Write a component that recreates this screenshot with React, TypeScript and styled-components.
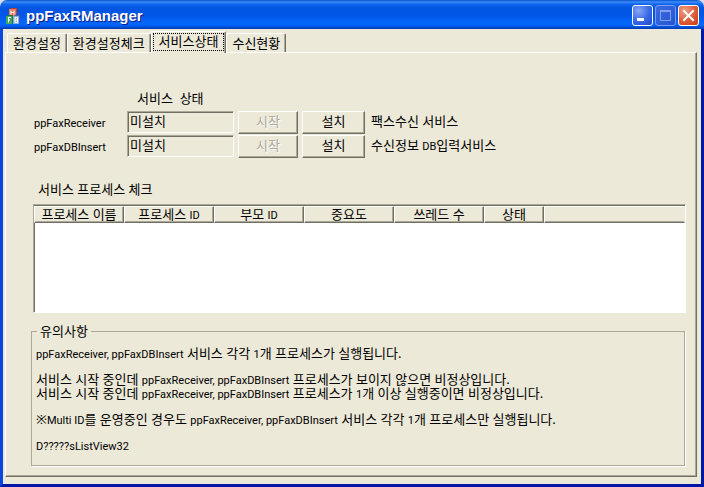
import React, { useState } from "react";
import styled, { createGlobalStyle, css } from "styled-components";

const face = "#ece9d8";
const shadow = "#aca899";
const dark = "#716f64";

const GlobalStyle = createGlobalStyle`
  body { margin: 0; background: #dcdcec; }
  *, *::before, *::after { box-sizing: border-box; }
  body, button, input, table {
    font-family: "Noto Sans", "Noto Sans CJK KR", sans-serif;
    font-size: 13px;
    line-height: 13px;
    color: #000;
  }
`;

const Window = styled.main`
  display: flex;
  flex-direction: column;
  min-height: 100vh;
  border-radius: 7px 7px 0 0;
  overflow: hidden;
`;

const TitleBar = styled.header`
  display: flex;
  align-items: center;
  gap: 5px;
  height: 29px;
  padding: 2px 5px 0 5px;
  background: linear-gradient(
    180deg,
    #0a4fd0 0,
    #3c90f8 2px,
    #1266ee 4px,
    #0256e2 8px,
    #0257e8 16px,
    #0464fa 22px,
    #0366fb 25px,
    #0250d8 27px,
    #0139b0 29px
  );
`;

const Title = styled.h1`
  flex: 1;
  margin: 0;
  font-family: "Liberation Sans", sans-serif;
  font-size: 15px;
  line-height: 20px;
  font-weight: bold;
  color: #fff;
  text-shadow: 1px 1px 0 #0a1883;
`;

const CaptionButtons = styled.div`
  display: flex;
  gap: 2px;
`;

const CaptionButton = styled.button<{ $tone: "blue" | "faded" | "red" }>`
  width: 21px;
  height: 21px;
  padding: 0;
  border: 1px solid ${(p) => (p.$tone === "faded" ? "#7a9cec" : "#fff")};
  border-radius: 3px;
  background: ${(p) =>
    p.$tone === "red"
      ? "radial-gradient(circle at 30% 25%, #f0a088 0, #e0603c 50%, #c83c14 100%)"
      : p.$tone === "faded"
        ? "linear-gradient(135deg, #3c6ce0, #2454d4)"
        : "radial-gradient(circle at 30% 25%, #88a8f4 0, #3c6ce8 50%, #1c48cc 100%)"};
  svg { display: block; }
`;

const Client = styled.div`
  flex: 1;
  display: flex;
  flex-direction: column;
  padding: 2px 4px 7px 2px;
  border: 3px solid;
  border-top: 0;
  border-color: #0018a8 #0018a8 #0018a8 #0a46e0;
  background: ${face};
`;

const TabList = styled.div`
  display: flex;
  align-items: flex-end;
  height: 21px;
  padding-left: 2px;
`;

const Tab = styled.button<{ $active: boolean }>`
  height: 19px;
  padding: 0 5px;
  border: 1px solid;
  border-color: #fff ${dark} transparent #fff;
  border-bottom: 0;
  border-radius: 2px 2px 0 0;
  box-shadow: inset -1px 0 0 ${shadow};
  background: ${face};
  white-space: nowrap;
  ${(p) =>
    p.$active &&
    css`
      z-index: 1;
      height: 22px;
      margin-bottom: -1px;
      padding: 0 1px 1px;
    `}
`;

const TabText = styled.span<{ $active: boolean }>`
  display: block;
  ${(p) =>
    p.$active &&
    css`
      padding: 1px 5px 2px;
      border: 1px dotted #000;
    `}
`;

const TabPage = styled.section`
  flex: 1;
  display: flex;
  flex-direction: column;
  padding: 38px 10px 10px 25px;
  border: 1px solid;
  border-color: #fff ${dark} ${dark} #fff;
  box-shadow: inset -1px -1px 0 ${shadow};
`;

const ServiceGrid = styled.div`
  display: grid;
  grid-template-columns: 89px 107px 60px 63px 1fr;
  column-gap: 4px;
  row-gap: 1px;
  padding-left: 3px;
`;

const StatusHeading = styled.h2`
  grid-column: 2 / -1;
  margin: 0 0 4px;
  padding-left: 10px;
  font-size: 13px;
  line-height: 15px;
  font-weight: normal;
  white-space: pre;
`;

const Latin = styled.span`
  font-family: Roboto, "Noto Sans", sans-serif;
  font-size: 11px;
  line-height: 0;
`;

const ServiceName = styled.label`
  padding-top: 3px;
  font-family: Roboto, "Noto Sans", sans-serif;
  font-size: 11px;
  line-height: 20px;
`;

const StatusField = styled.input`
  width: 100%;
  height: 22px;
  padding: 0 0 3px 2px;
  border: 1px solid;
  border-color: ${shadow} #fff #fff ${shadow};
  border-radius: 0;
  box-shadow: inset 1px 1px 0 ${dark};
  background: ${face};
  outline: 0;
`;

const ActionButton = styled.button`
  height: 23px;
  padding: 0 0 2px;
  border: 1px solid;
  border-color: #fff ${dark} ${dark} #fff;
  border-radius: 0;
  box-shadow: inset -1px -1px 0 ${shadow};
  background: ${face};
  &:disabled {
    color: ${shadow};
    text-shadow: 1px 1px 0 #fff;
  }
`;

const ServiceNote = styled.span`
  padding-left: 2px;
  line-height: 20px;
`;

const SectionTitle = styled.h2`
  margin: 24px 0 7px 7px;
  font-size: 13px;
  line-height: 15px;
  font-weight: normal;
`;

const ListView = styled.div`
  flex: 1;
  min-height: 60px;
  margin-left: 2px;
  border: 1px solid;
  border-color: ${shadow} #fff #fff ${shadow};
  box-shadow: inset 1px 1px 0 ${dark};
  padding: 1px 0 0;
  background: #fff;
`;

const Table = styled.table`
  width: 100%;
  table-layout: fixed;
  border-collapse: separate;
  border-spacing: 0;
`;

const HeaderCell = styled.th<{ $width?: number }>`
  width: ${(p) => (p.$width ? `${p.$width}px` : "auto")};
  height: 17px;
  padding: 0;
  border: 1px solid;
  border-color: #fff ${(p) => (p.$width ? dark : face)} ${dark} #fff;
  box-shadow: inset ${(p) => (p.$width ? "-1px" : "0")} -1px 0 ${shadow};
  background: ${face};
  font-weight: normal;
  white-space: nowrap;
`;

const Notes = styled.fieldset`
  margin: 11px 1px 0 0;
  min-width: 0;
  padding: 7px 4px 13px;
  border: 1px solid ${shadow};
  box-shadow: 1px 1px 0 #fff;
`;

const Legend = styled.legend`
  margin-left: 1px;
  padding: 0 3px;
  font-size: 13px;
  line-height: 15px;
`;

const Note = styled.p`
  margin: 0 0 12px;
  line-height: 14px;
  &:last-child { margin-bottom: 0; }
`;

const AppIcon = () => (
  <svg width="16" height="16" viewBox="0 0 16 16" aria-hidden="true">
    <path d="M4 2l2-2h6v6l-2 2H4z" fill="#b8432c" />
    <path d="M4 1h7v7H4z" fill="#e8785c" />
    <path d="M6 2.500v4M9 2.500v4M6 4.500h3" stroke="#fff" fill="none" />
    <path d="M1 9l2-2h5v7l-2 2H1z" fill="#1d7436" />
    <path d="M1 8h6v8H1z" fill="#44a864" />
    <path d="M3.500 14.500v-5M3 9.500h3M3 12h2" stroke="#fff" fill="none" />
    <path d="M8 9l2-2h5v7l-2 2H8z" fill="#3a62a8" />
    <path d="M8 8h6v8H8z" fill="#86aedc" />
    <path d="M10 9.500h2.500v5H10zM10 12h2" stroke="#fff" fill="none" />
  </svg>
);

const tabs = ["환경설정", "환경설정체크", "서비스상태", "수신현황"];

const columns: { label: React.ReactNode; width: number }[] = [
  { label: "프로세스 이름", width: 90 },
  { label: <>프로세스 <Latin>ID</Latin></>, width: 90 },
  { label: <>부모 <Latin>ID</Latin></>, width: 90 },
  { label: "중요도", width: 90 },
  { label: "쓰레드 수", width: 90 },
  { label: "상태", width: 60 },
];

const services: { name: string; note: React.ReactNode }[] = [
  { name: "ppFaxReceiver", note: "팩스수신 서비스" },
  { name: "ppFaxDBInsert", note: <>수신정보 <Latin>DB</Latin>입력서비스</> },
];

const Names = () => <Latin>ppFaxReceiver, ppFaxDBInsert</Latin>;

export default function App() {
  const [active, setActive] = useState(2);
  return (
    <>
      <GlobalStyle />
      <Window>
        <TitleBar>
          <AppIcon />
          <Title>ppFaxRManager</Title>
          <CaptionButtons>
            <CaptionButton $tone="blue" aria-label="최소화">
              <svg width="19" height="19"><path d="M4 12h7v3H4z" fill="#fff" /></svg>
            </CaptionButton>
            <CaptionButton $tone="faded" aria-label="최대화" disabled>
              <svg width="19" height="19">
                <path d="M4.500 5.500h10v9h-10z" stroke="#84a0ee" fill="none" />
                <path d="M4 4h11v2H4z" fill="#84a0ee" />
              </svg>
            </CaptionButton>
            <CaptionButton $tone="red" aria-label="닫기">
              <svg width="19" height="19">
                <path d="M5 5l9 9M14 5l-9 9" stroke="#fff" strokeWidth="2" strokeLinecap="square" />
              </svg>
            </CaptionButton>
          </CaptionButtons>
        </TitleBar>
        <Client>
          <TabList role="tablist">
            {tabs.map((tab, i) => (
              <Tab key={tab} role="tab" aria-selected={i === active} $active={i === active} onClick={() => setActive(i)}>
                <TabText $active={i === active}>{tab}</TabText>
              </Tab>
            ))}
          </TabList>
          <TabPage role="tabpanel">
            <ServiceGrid>
              <StatusHeading>{"서비스  상태"}</StatusHeading>
              {services.map((service) => (
                <React.Fragment key={service.name}>
                  <ServiceName htmlFor={service.name}>{service.name}</ServiceName>
                  <StatusField id={service.name} value="미설치" readOnly />
                  <ActionButton disabled>시작</ActionButton>
                  <ActionButton>설치</ActionButton>
                  <ServiceNote>{service.note}</ServiceNote>
                </React.Fragment>
              ))}
            </ServiceGrid>
            <SectionTitle>서비스 프로세스 체크</SectionTitle>
            <ListView>
              <Table aria-label="서비스 프로세스 체크">
                <thead>
                  <tr>
                    {columns.map((column, i) => (
                      <HeaderCell key={i} $width={column.width} scope="col">{column.label}</HeaderCell>
                    ))}
                    <HeaderCell />
                  </tr>
                </thead>
              </Table>
            </ListView>
            <Notes>
              <Legend>유의사항</Legend>
              <Note><Names /> 서비스 각각 <Latin>1</Latin>개 프로세스가 실행됩니다.</Note>
              <Note>
                서비스 시작 중인데 <Names /> 프로세스가 보이지 않으면 비정상입니다.
                <br />
                서비스 시작 중인데 <Names /> 프로세스가 <Latin>1</Latin>개 이상 실행중이면 비정상입니다.
              </Note>
              <Note>
                ※<Latin>Multi ID</Latin>를 운영중인 경우도 <Names /> 서비스 각각 <Latin>1</Latin>개 프로세스만 실행됩니다.
              </Note>
              <Note><Latin>D?????sListView32</Latin></Note>
            </Notes>
          </TabPage>
        </Client>
      </Window>
    </>
  );
}
